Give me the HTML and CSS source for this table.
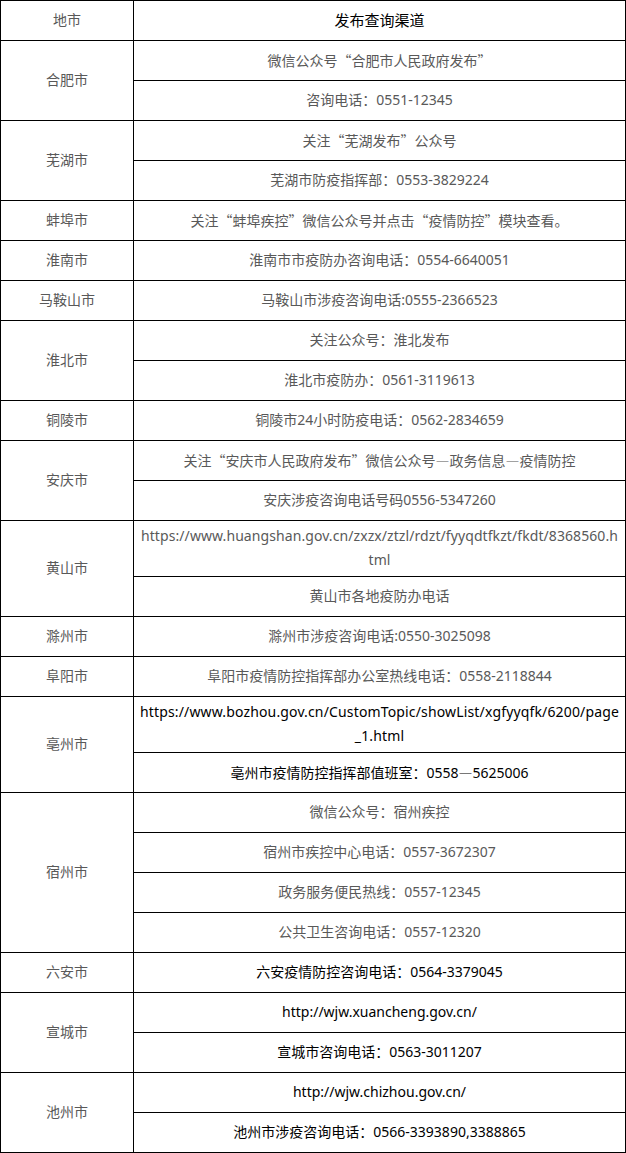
FILE: index.html
```html
<!DOCTYPE html>
<html lang="zh-CN">
<head>
<meta charset="utf-8">
<title>发布查询渠道</title>
<link rel="stylesheet" href="styles.css">
</head>
<body>
<table class="channels">
  <colgroup><col class="col-city"><col class="col-info"></colgroup>
  <tr><td class="city">地市</td><td class="head">发布查询渠道</td></tr>
  <tr><td class="city" rowspan="2">合肥市</td><td>微信公众号<span class="q">“</span>合肥市人民政府发布<span class="q">”</span></td></tr>
  <tr><td>咨询电话：0551-12345</td></tr>
  <tr><td class="city" rowspan="2">芜湖市</td><td>关注<span class="q">“</span>芜湖发布<span class="q">”</span>公众号</td></tr>
  <tr><td>芜湖市防疫指挥部：0553-3829224</td></tr>
  <tr><td class="city">蚌埠市</td><td>关注<span class="q">“</span>蚌埠疾控<span class="q">”</span>微信公众号并点击<span class="q">“</span>疫情防控<span class="q">”</span>模块查看。</td></tr>
  <tr><td class="city">淮南市</td><td>淮南市市疫防办咨询电话：0554-6640051</td></tr>
  <tr><td class="city">马鞍山市</td><td>马鞍山市涉疫咨询电话:0555-2366523</td></tr>
  <tr><td class="city" rowspan="2">淮北市</td><td>关注公众号：淮北发布</td></tr>
  <tr><td>淮北市疫防办：0561-3119613</td></tr>
  <tr><td class="city">铜陵市</td><td>铜陵市24小时防疫电话：0562-2834659</td></tr>
  <tr><td class="city" rowspan="2">安庆市</td><td>关注<span class="q">“</span>安庆市人民政府发布<span class="q">”</span>微信公众号<span class="q">—</span>政务信息<span class="q">—</span>疫情防控</td></tr>
  <tr><td>安庆涉疫咨询电话号码0556-5347260</td></tr>
  <tr><td class="city" rowspan="2">黄山市</td><td class="url url-hs">https://www.huangshan.gov.cn/zxzx/ztzl/rdzt/fyyqdtfkzt/fkdt/8368560.html</td></tr>
  <tr><td>黄山市各地疫防办电话</td></tr>
  <tr><td class="city">滁州市</td><td>滁州市涉疫咨询电话:0550-3025098</td></tr>
  <tr><td class="city">阜阳市</td><td>阜阳市疫情防控指挥部办公室热线电话：0558-2118844</td></tr>
  <tr><td class="city" rowspan="2">亳州市</td><td class="url url-bz dark">https://www.bozhou.gov.cn/CustomTopic/showList/xgfyyqfk/6200/page_1.html</td></tr>
  <tr><td class="dark">亳州市疫情防控指挥部值班室：0558<span class="q">—</span>5625006</td></tr>
  <tr><td class="city" rowspan="4">宿州市</td><td>微信公众号：宿州疾控</td></tr>
  <tr><td>宿州市疾控中心电话：0557-3672307</td></tr>
  <tr><td>政务服务便民热线：0557-12345</td></tr>
  <tr><td>公共卫生咨询电话：0557-12320</td></tr>
  <tr><td class="city">六安市</td><td class="dark">六安疫情防控咨询电话：0564-3379045</td></tr>
  <tr><td class="city" rowspan="2">宣城市</td><td class="dark">http://wjw.xuancheng.gov.cn/</td></tr>
  <tr><td class="dark">宣城市咨询电话：0563-3011207</td></tr>
  <tr><td class="city" rowspan="2">池州市</td><td class="dark">http://wjw.chizhou.gov.cn/</td></tr>
  <tr><td class="dark">池州市涉疫咨询电话：0566-3393890,3388865</td></tr>
</table>
</body>
</html>
```
FILE: styles.css
```css
html, body {
  margin: 0;
  padding: 0;
  background: #ffffff;
}

.channels {
  width: 626px;
  border-collapse: collapse;
  table-layout: fixed;
  font-family: "Noto Sans", "Noto Sans CJK SC", sans-serif;
  font-size: 14px;
  line-height: 24px;
  color: #595959;
}

.col-city { width: 133px; }

.channels tr { height: 40px; }

.channels td {
  border: 1px solid #000000;
  padding: 3px 5px 4px;
  text-align: center;
  vertical-align: middle;
  word-break: break-all;
}

.channels td.head {
  font-size: 15px;
  color: #000000;
}

.channels td.dark { color: #000000; }

.channels td.url-hs { letter-spacing: 0.08px; }

.channels td.url-bz { letter-spacing: 0.15px; }

.q {
  font-family: "Noto Sans CJK SC", sans-serif;
}
```
